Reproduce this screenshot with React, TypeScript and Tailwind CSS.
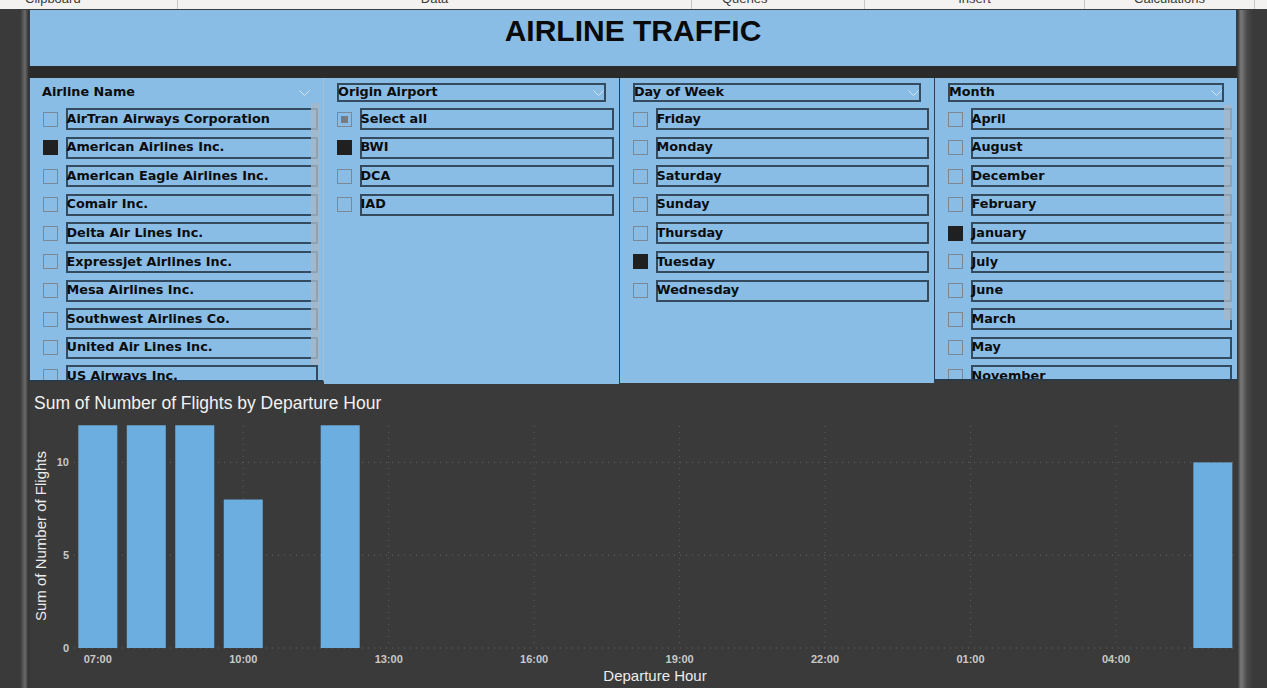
import React from "react";

type Item = { label: string; state?: "on" | "partial" };

const airlines: Item[] = [
  { label: "AirTran Airways Corporation" },
  { label: "American Airlines Inc.", state: "on" },
  { label: "American Eagle Airlines Inc." },
  { label: "Comair Inc." },
  { label: "Delta Air Lines Inc." },
  { label: "Expressjet Airlines Inc." },
  { label: "Mesa Airlines Inc." },
  { label: "Southwest Airlines Co." },
  { label: "United Air Lines Inc." },
  { label: "US Airways Inc." },
];

const airports: Item[] = [
  { label: "Select all", state: "partial" },
  { label: "BWI", state: "on" },
  { label: "DCA" },
  { label: "IAD" },
];

const days: Item[] = [
  { label: "Friday" },
  { label: "Monday" },
  { label: "Saturday" },
  { label: "Sunday" },
  { label: "Thursday" },
  { label: "Tuesday", state: "on" },
  { label: "Wednesday" },
];

const months: Item[] = [
  { label: "April" },
  { label: "August" },
  { label: "December" },
  { label: "February" },
  { label: "January", state: "on" },
  { label: "July" },
  { label: "June" },
  { label: "March" },
  { label: "May" },
  { label: "November" },
];

// flights per departure hour slot, slot 0 = 07:00
const flights: { slot: number; value: number }[] = [
  { slot: 0, value: 12 },
  { slot: 1, value: 12 },
  { slot: 2, value: 12 },
  { slot: 3, value: 8 },
  { slot: 5, value: 12 },
  { slot: 23, value: 10 },
];

const ticks = ["07:00", "10:00", "13:00", "16:00", "19:00", "22:00", "01:00", "04:00"];

const Check: React.FC<{ state?: "on" | "partial" }> = ({ state }) => {
  if (state === "on") {
    return <span className="w-[15px] h-[15px] shrink-0 bg-[#202020] border border-[#202020]" />;
  }
  return (
    <span className="w-[15px] h-[15px] shrink-0 border border-[#7c8893] flex items-center justify-center">
      {state === "partial" && <span className="w-[7px] h-[7px] bg-[#787c80]" />}
    </span>
  );
};

const Chevron: React.FC = () => (
  <svg width="11" height="6" viewBox="0 0 11 6" className="shrink-0">
    <polyline points="0.5,0.5 5.5,5.5 10.5,0.5" fill="none" stroke="#d3e3f0" strokeWidth="1" />
  </svg>
);

const Slicer: React.FC<{
  title: string;
  items: Item[];
  boxed?: boolean;
  className?: string;
  scroll?: React.ReactNode;
}> = ({ title, items, boxed = true, className = "", scroll }) => (
  <div className={`relative flex flex-col overflow-hidden bg-[#89bde6] ${className}`}>
    {/* header */}
    <div
      className={`mt-[5px] mx-[13px] h-[19px] flex items-center justify-between shrink-0 ${
        boxed ? "border-2 border-[#344a5e]" : ""
      }`}
    >
      <span className="text-[12.8px] font-bold text-[#0c0c0c] leading-none -ml-[1px]">{title}</span>
      <Chevron />
    </div>

    {/* items */}
    <div className="mt-[6px] flex flex-col gap-[6.6px] pl-[13px] pr-[5px]">
      {items.map((it) => (
        <div key={it.label} className="flex items-center gap-[8px] h-[22px] shrink-0">
          <Check state={it.state} />
          <div className="flex-1 h-[22px] border-2 border-[#344a5e] flex items-center">
            <span className="text-[12.8px] font-bold text-[#0c0c0c] leading-none whitespace-nowrap -ml-[1.5px]">
              {it.label}
            </span>
          </div>
        </div>
      ))}
    </div>
    {scroll}
  </div>
);

const Chart: React.FC = () => {
  const zero = 226;
  const unit = 18.56;
  const slotX = (i: number) => 49.3 + i * 48.48;
  const tickX = (k: number) => 68.8 + k * 145.45;
  return (
    <svg width="1208" height="266" viewBox="0 0 1208 266" className="block">
      {/* horizontal grid */}
      {[0, 5, 10].map((v) => (
        <line
          key={v}
          x1="45"
          x2="1204"
          y1={zero - v * unit}
          y2={zero - v * unit}
          stroke="#666"
          strokeWidth="1"
          strokeDasharray="1 5"
        />
      ))}
      {/* vertical grid */}
      {ticks.map((t, k) => (
        <line
          key={t}
          x1={tickX(k)}
          x2={tickX(k)}
          y1="4"
          y2={zero}
          stroke="#5f5f5f"
          strokeWidth="1"
          strokeDasharray="1 5"
        />
      ))}
      {/* bars */}
      {flights.map((f) => (
        <rect
          key={f.slot}
          x={slotX(f.slot)}
          y={zero - f.value * unit}
          width="39"
          height={f.value * unit}
          fill="#6daee0"
        />
      ))}
      {/* y ticks */}
      {[0, 5, 10].map((v) => (
        <text
          key={v}
          x="40"
          y={zero - v * unit + 4}
          textAnchor="end"
          fontSize="11"
          fontWeight="700"
          fill="#c9c9c9"
        >
          {v}
        </text>
      ))}
      {/* x ticks */}
      {ticks.map((t, k) => (
        <text key={t} x={tickX(k)} y="241" textAnchor="middle" fontSize="11" fontWeight="700" fill="#c9c9c9">
          {t}
        </text>
      ))}
      <text x="626" y="259" textAnchor="middle" fontSize="15" fill="#ececec">
        Departure Hour
      </text>
      <text x="17" y="114" textAnchor="middle" fontSize="15" fill="#ececec" transform="rotate(-90 17 114)">
        Sum of Number of Flights
      </text>
    </svg>
  );
};

const App: React.FC = () => {
  return (
    <div className="w-[1267px] h-[688px] overflow-hidden bg-[#3a3a3a] font-['Liberation_Sans',Arial,sans-serif]">
      {/* ribbon remnant, only the bottom of its labels shows */}
      <div className="h-[10px] bg-[#f3f2f1] border-b border-[#3c3c3c] flex overflow-hidden text-[13px] text-[#3b3b3b]">
        <div className="w-[178px] border-r border-[#c8c6c4] pl-[25px]">
          <div className="-mt-[9px] leading-[16px]">Clipboard</div>
        </div>
        <div className="w-[514px] border-r border-[#c8c6c4] text-center">
          <div className="-mt-[9px] leading-[16px]">Data</div>
        </div>
        <div className="w-[173px] border-r border-[#c8c6c4] pl-[30px]">
          <div className="-mt-[9px] leading-[16px]">Queries</div>
        </div>
        <div className="w-[220px] border-r border-[#c8c6c4] text-center">
          <div className="-mt-[9px] leading-[16px]">Insert</div>
        </div>
        <div className="w-[170px] border-r border-[#c8c6c4] text-center">
          <div className="-mt-[9px] leading-[16px]">Calculations</div>
        </div>
      </div>

      <div className="flex h-[678px]">
        {/* left gutter */}
        <div className="w-[29px] shrink-0 bg-[linear-gradient(to_right,#3a3a3a_0%,#3a3a3a_70%,#6a6a6a_86%,#2a2a2a_100%)]" />

        {/* report canvas */}
        <div className="w-[1208px] shrink-0 flex flex-col">
          <div className="h-[56px] bg-[#89bde6] border-x border-[#2d3f50] flex justify-center pt-[4px]">
            <h1 className="text-[30px] font-bold leading-[34px] text-[#0a0a0a]">AIRLINE TRAFFIC</h1>
          </div>
          <div className="h-[12px] bg-[#2b2b2b]" />

          <div className="h-[306px] flex font-['DejaVu_Sans',sans-serif] bg-[#3a3a3a]">
            <Slicer
              title="Airline Name"
              items={airlines}
              boxed={false}
              className="w-[295px] h-[304px] border-l border-[#2d3f50] border-r border-r-[#a9c0d3] border-b-2 border-b-[#2b3a47]"
              scroll={<div className="absolute left-[281px] top-[25px] w-[9px] h-[262px] bg-[#a6b8c8]/80" />}
            />
            <Slicer
              title="Origin Airport"
              items={airports}
              className="w-[296px] h-[306px] border-r border-[#2d3f50]"
            />
            <Slicer
              title="Day of Week"
              items={days}
              className="w-[315px] h-[305px] border-r border-[#2d3f50]"
            />
            <Slicer
              title="Month"
              items={months}
              className="w-[302px] h-[303px] border-b-2 border-[#2b3a47]"
              scroll={<div className="absolute left-[289px] top-[27px] w-[8px] h-[215px] bg-[#a6b8c8]/80" />}
            />
          </div>

          <div className="flex-1 bg-[#3a3a3a]">
            <div className="h-[38px] flex items-center pl-[5px] text-[17.5px] text-[#f2f2f2]">
              Sum of Number of Flights by Departure Hour
            </div>
            <Chart />
          </div>
        </div>

        {/* right gutter */}
        <div className="w-[30px] shrink-0 bg-[linear-gradient(to_right,#2e2e2e_0px,#7a7a7a_4px,#4a4a4a_10px,#3a3a3a_16px,#3a3a3a_100%)]" />
      </div>
    </div>
  );
};

export default App;
